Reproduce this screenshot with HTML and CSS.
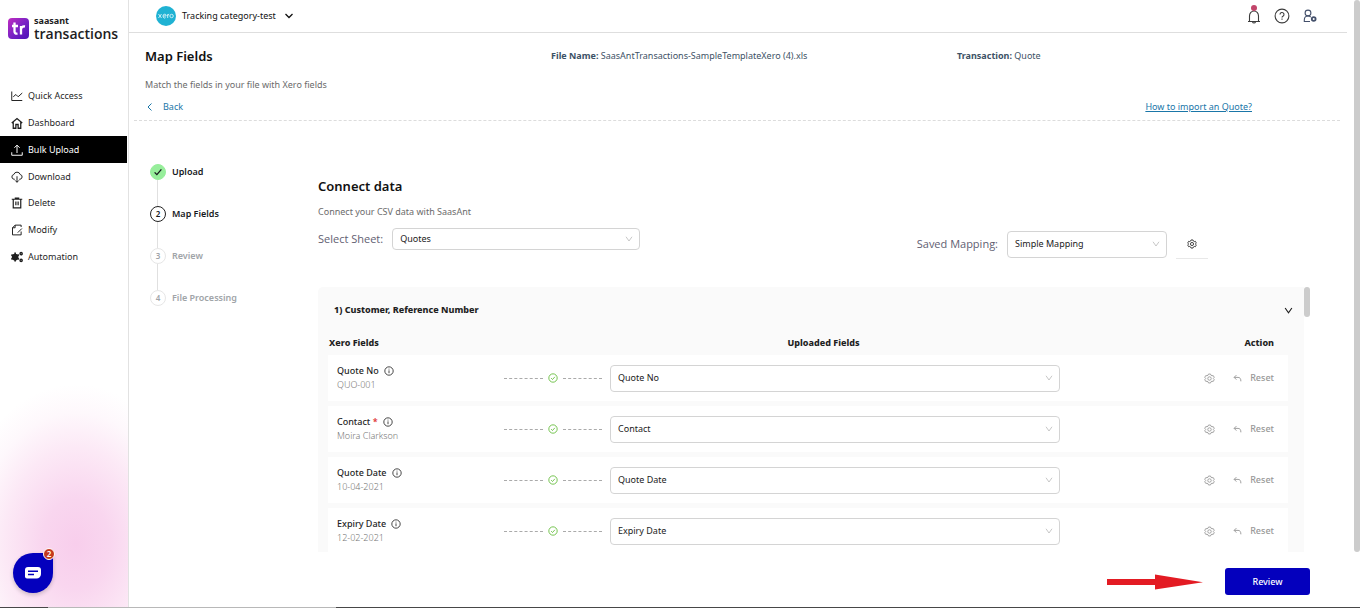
FILE: index.html
```html
<!DOCTYPE html>
<html lang="en">
<head>
<meta charset="utf-8">
<meta name="viewport" content="width=device-width, initial-scale=1">
<title>Map Fields - SaasAnt Transactions</title>
<link rel="stylesheet" href="styles.css">
</head>
<body>
<svg class="defs" aria-hidden="true">
  <symbol id="gear" viewBox="0 0 16 16"><path d="M6.500 1.500h3l.6 1.700 1.500.9 1.800-.4 1.500 2.600-1.200 1.400v.6l1.200 1.400-1.500 2.600-1.800-.4-1.500.9-.6 1.700h-3l-.6-1.700-1.500-.9-1.800.4-1.500-2.600 1.200-1.400v-.6L1.100 6.300l1.500-2.600 1.800.4 1.500-.9z"/><circle cx="8" cy="8" r="2.500"/></symbol>
  <symbol id="info" viewBox="0 0 16 16"><circle cx="8" cy="8" r="6.700"/><path d="M8 7v4.500M8 4.300v1.300"/></symbol>
  <symbol id="ok" viewBox="0 0 16 16"><circle cx="8" cy="8" r="6.700"/><path d="M5 8.200l2.200 2.200 3.800-4.300"/></symbol>
  <symbol id="down" viewBox="0 0 16 16"><path d="M2 3.500L8 12l6-8.500"/></symbol>
  <symbol id="undo" viewBox="0 0 16 16"><path d="M6 2L2 6l4 4M2 6h7c3.500 0 5 2.500 5 7"/></symbol>
</svg>
<div class="app">
  <aside class="sidebar">
    <a class="brand" href="#">
      <svg class="brand-mark" viewBox="0 0 21 21" aria-hidden="true">
        <defs><linearGradient id="mark" x1="0" y1="0" x2="1" y2="1"><stop offset="0" stop-color="#c12cc0"/><stop offset=".5" stop-color="#7b22c5"/><stop offset="1" stop-color="#4a12b8"/></linearGradient></defs>
        <rect width="21" height="21" rx="4" fill="url(#mark)"/>
        <path d="M6.500 4.500v9q0 2.500 3 2.100M4 8h6M13 16.500V8M13 11q.6-3 4-2.500" fill="none" stroke="#fff" stroke-width="2.300"/>
      </svg>
      <span class="brand-text"><span class="brand-top">saasant</span><span class="brand-name">transactions</span></span>
    </a>
    <nav class="nav">
      <a href="#"><svg viewBox="0 0 16 16"><path d="M1 2v12h14M3 9l3.500-3 3 3L15 4"/></svg>Quick Access</a>
      <a href="#"><svg viewBox="0 0 16 16"><path d="M1 8l7-6 7 6M3 7v8h3.500v-5h3v5H13V7" stroke-width="1.700"/></svg>Dashboard</a>
      <a href="#" class="active" aria-current="page"><svg viewBox="0 0 16 16"><path d="M8 12V1.500M4.500 5L8 1.500 11.500 5M1 11v4h14v-4"/></svg>Bulk Upload</a>
      <a href="#"><svg viewBox="0 0 16 16"><path d="M5 11H4a3.200 3.200 0 0 1-.3-6.300 4.500 4.500 0 0 1 8.600 0A3.200 3.200 0 0 1 12 11h-1M8 7v8M5.500 12.500L8 15l2.500-2.500"/></svg>Download</a>
      <a href="#"><svg viewBox="0 0 16 16"><path d="M1 3h14M3 3v11.500h10V3M5 1.500h6M6.500 6v5M9.500 6v5" stroke-width="1.600"/></svg>Delete</a>
      <a href="#"><svg viewBox="0 0 16 16"><path d="M13.500 10v4.500H2V5l3.500-3.500h8V4M2 5h3.500V1.500M9 11.500l5.500-5.500"/></svg>Modify</a>
      <a href="#"><svg viewBox="0 0 16 16"><circle cx="5.500" cy="8" r="3" stroke-width="3"/><path d="M5.500 2v12M.5 5l10 6M.5 11l10-6" stroke-width="2.200"/><circle cx="13.500" cy="3.500" r="1.500" stroke-width="1.800"/><circle cx="13.500" cy="12.500" r="1.500" stroke-width="1.800"/></svg>Automation</a>
    </nav>
    <button class="chat" type="button" aria-label="Open chat">
      <svg viewBox="0 0 16 12" aria-hidden="true"><path d="M3 0h10a3 3 0 0 1 3 3v4a4.500 4.500 0 0 1-4.500 4.500H2a2 2 0 0 1-2-2V3a3 3 0 0 1 3-3z" fill="#fff"/><path d="M3 4.200h10M3 7.500h6" stroke="#0400bd" stroke-width="1.600"/></svg>
      <span class="chat-count">2</span>
    </button>
  </aside>

  <div class="page">
    <header class="topbar">
      <button class="org" type="button">
        <svg class="org-logo" viewBox="0 0 20 20" aria-hidden="true"><circle cx="10" cy="10" r="10" fill="#1fb2d3"/><g fill="none" stroke="#d8f3f8" stroke-width=".9"><path d="M2.500 8l3 4M5.500 8l-3 4M7 10h3.200a1.600 1.900 0 1 0-.6 1.600M11.700 12V8.200M11.700 10q0-1.800 1.500-1.800"/><circle cx="15.600" cy="10" r="1.700"/></g></svg>
        Tracking category-test
        <svg class="org-caret" viewBox="0 0 12 12" aria-hidden="true"><path d="M2.500 4L6 7.500 9.500 4"/></svg>
      </button>
      <div class="tools">
        <button type="button" aria-label="Notifications"><svg viewBox="0 0 16 20"><path d="M2 16.500h12M3.500 16.500V11a4.500 5 0 0 1 9 0v5.500M6.500 17a1.600 1.600 0 0 0 3 0M8 4.500V6"/><circle cx="8" cy="3" r="3" fill="#c2456a" stroke="none"/></svg></button>
        <button type="button" aria-label="Help"><svg viewBox="0 0 16 20"><circle cx="8" cy="11" r="6.900"/><path d="M6 9.500a2 2 0 1 1 3 1.700q-1 .6-1 1.300M8 13.500v1.200"/></svg></button>
        <button type="button" aria-label="Account settings" class="account"><svg viewBox="0 0 16 20"><circle cx="6" cy="8" r="2.900"/><path d="M8 16.500H2.300V15c0-2.500 1.200-4 3.700-4 1.200 0 2 .3 2.700 1"/><circle cx="11.700" cy="14" r="1.900" stroke-width="1.800"/></svg></button>
      </div>
    </header>

    <section class="intro">
      <div class="intro-head">
        <h1>Map Fields</h1>
        <p><b>File Name:</b> SaasAntTransactions-SampleTemplateXero (4).xls</p>
        <p><b>Transaction:</b> Quote</p>
      </div>
      <p class="muted">Match the fields in your file with Xero fields</p>
      <div class="intro-links">
        <a class="back" href="#"><svg viewBox="0 0 10 10" aria-hidden="true"><path d="M6.500 1.500L3 5l3.500 3.500"/></svg>Back</a>
        <a class="how" href="#">How to import an Quote?</a>
      </div>
    </section>

    <div class="work">
      <ol class="steps">
        <li class="done"><span class="dot"><svg viewBox="0 0 16 16" aria-label="Done"><path d="M3.500 8.500l3 3 6-7" stroke-width="1.800"/></svg></span>Upload</li>
        <li class="current"><span class="dot">2</span>Map Fields</li>
        <li><span class="dot">3</span>Review</li>
        <li><span class="dot">4</span>File Processing</li>
      </ol>

      <main class="content">
        <h2>Connect data</h2>
        <p class="muted">Connect your CSV data with SaasAnt</p>
        <div class="filters">
          <div class="field">
            <label for="sheet">Select Sheet:</label>
            <span class="select sheet"><select id="sheet"><option>Quotes</option></select><svg><use href="#down"/></svg></span>
          </div>
          <div class="field saved">
            <label for="mapping">Saved Mapping:</label>
            <span class="select tall mapping"><select id="mapping"><option>Simple Mapping</option></select><svg><use href="#down"/></svg></span>
            <button class="map-settings" type="button" aria-label="Mapping settings"><svg><use href="#gear"/></svg></button>
          </div>
        </div>

        <div class="panel-wrap">
          <div class="panel">
            <button class="group" type="button" aria-expanded="true">1) Customer, Reference Number<svg><use href="#down"/></svg></button>
            <table class="map">
              <thead><tr><th scope="col">Xero Fields</th><th></th><th scope="col" class="mid">Uploaded Fields</th><th scope="col" class="end">Action</th></tr></thead>
              <tbody>
                <tr>
                  <td><label for="f1">Quote No</label><svg class="info"><use href="#info"/></svg><small>QUO-001</small></td>
                  <td><span class="link"><svg><use href="#ok"/></svg></span></td>
                  <td><span class="select tall"><select id="f1"><option>Quote No</option></select><svg><use href="#down"/></svg></span></td>
                  <td><div class="actions"><button type="button" aria-label="Field settings"><svg><use href="#gear"/></svg></button><button type="button"><svg class="undo"><use href="#undo"/></svg>Reset</button></div></td>
                </tr>
                <tr>
                  <td><label for="f2">Contact <i>*</i></label><svg class="info"><use href="#info"/></svg><small>Moira Clarkson</small></td>
                  <td><span class="link"><svg><use href="#ok"/></svg></span></td>
                  <td><span class="select tall"><select id="f2"><option>Contact</option></select><svg><use href="#down"/></svg></span></td>
                  <td><div class="actions"><button type="button" aria-label="Field settings"><svg><use href="#gear"/></svg></button><button type="button"><svg class="undo"><use href="#undo"/></svg>Reset</button></div></td>
                </tr>
                <tr>
                  <td><label for="f3">Quote Date</label><svg class="info"><use href="#info"/></svg><small>10-04-2021</small></td>
                  <td><span class="link"><svg><use href="#ok"/></svg></span></td>
                  <td><span class="select tall"><select id="f3"><option>Quote Date</option></select><svg><use href="#down"/></svg></span></td>
                  <td><div class="actions"><button type="button" aria-label="Field settings"><svg><use href="#gear"/></svg></button><button type="button"><svg class="undo"><use href="#undo"/></svg>Reset</button></div></td>
                </tr>
                <tr>
                  <td><label for="f4">Expiry Date</label><svg class="info"><use href="#info"/></svg><small>12-02-2021</small></td>
                  <td><span class="link"><svg><use href="#ok"/></svg></span></td>
                  <td><span class="select tall"><select id="f4"><option>Expiry Date</option></select><svg><use href="#down"/></svg></span></td>
                  <td><div class="actions"><button type="button" aria-label="Field settings"><svg><use href="#gear"/></svg></button><button type="button"><svg class="undo"><use href="#undo"/></svg>Reset</button></div></td>
                </tr>
              </tbody>
            </table>
          </div>
          <span class="panel-thumb"></span>
        </div>

        <div class="footer">
          <svg class="arrow" viewBox="0 0 96 16" aria-hidden="true"><path d="M0 5h48V0.500L96 8.300 48 15.500V11H0z" fill="#e31b23"/></svg>
          <button class="review" type="button">Review</button>
        </div>
      </main>
    </div>
  </div>
  <div class="page-scroll"><span></span></div>
</div>
</body>
</html>
```
FILE: styles.css
```css
* { box-sizing: border-box; }

body {
  margin: 0;
  background: #fff;
  color: #1f1f1f;
  font: 9px/14px "Noto Sans", "Open Sans", sans-serif;
}

h1, h2, p, ol { margin: 0; padding: 0; }

a { color: inherit; text-decoration: none; }

button {
  padding: 0;
  border: 0;
  background: none;
  color: inherit;
  font: inherit;
  cursor: pointer;
}

svg {
  flex: none;
  width: 12px;
  height: 12px;
  fill: none;
  stroke: currentColor;
  stroke-width: 1.3;
}

.brand-mark, .org-logo, .chat svg, .arrow { stroke: none; }

.defs { display: none; }

.app {
  display: grid;
  grid-template-columns: 129px minmax(0, 1fr) 6px;
  min-height: 100vh;
  padding-bottom: 1px;
  background: linear-gradient(90deg, #484848 48px, #b8b8b8 48px 336px, #484848 336px) bottom / 100% 1px no-repeat;
}

/* Sidebar */
.sidebar {
  display: flex;
  flex-direction: column;
  padding: 14px 0 14px;
  border-right: 1px solid #e2e2e2;
  background: radial-gradient(ellipse 120px 160px at 76px 544px, #f8ceec 0%, #f9d6ef 28%, #fce9f6 60%, #fef8fc 82%, #fff 100%);
}

.brand {
  display: flex;
  align-items: center;
  gap: 5px;
  height: 28px;
  padding-left: 8px;
  color: #1d1d22;
}

.brand-mark { width: 21px; height: 21px; }

.brand-text { display: flex; flex-direction: column; font-weight: 700; }

.brand-top { font-size: 9px; line-height: 12px; }

.brand-name { font-size: 14px; line-height: 14px; font-family: "Open Sans", sans-serif; font-weight: 600; }

.nav { display: flex; flex-direction: column; height: 187px; margin-top: 41px; }

.nav a {
  display: flex;
  flex: 1;
  align-items: center;
  gap: 5px;
  margin-right: 1px;
  padding-left: 11px;
}

.nav .active { background: #000; color: #fff; }

.chat {
  position: relative;
  display: grid;
  place-items: center;
  width: 40px;
  height: 40px;
  margin: auto 0 0 13px;
  border-radius: 50% 0 50% 50%;
  background: #0400bd;
  box-shadow: 0 2px 4px #0003;
}

.chat svg { width: 16px; height: 12px; }

.chat-count {
  position: absolute;
  top: -5px;
  right: -2px;
  width: 12px;
  height: 12px;
  border: 1px solid #fff;
  border-radius: 50%;
  background: #c4391d;
  color: #fff;
  font-size: 8px;
  font-weight: 600;
  line-height: 10px;
}

/* Top bar */
.page { display: flex; flex-direction: column; }

.topbar {
  display: flex;
  align-items: center;
  justify-content: space-between;
  height: 33px;
  margin-right: 7px;
  padding: 0 29px 0 27px;
  border-bottom: 1px solid #dedede;
}

.org { display: flex; align-items: center; gap: 6px; color: #111; }

.org-logo { width: 20px; height: 20px; }

.org-caret { margin-left: 1px; }

.tools { display: flex; gap: 12px; padding-bottom: 2px; color: #3c3c3c; }

.tools button { display: flex; }

.tools svg { width: 16px; height: 20px; stroke-width: 1.1; }

.tools .account { color: #44506b; }

/* Page heading */
.intro {
  margin: 0 14px 0 5px;
  padding: 13px 0 6px 11px;
  border-bottom: 1px dashed #dcdcdc;
}

.intro-head {
  display: grid;
  grid-template-columns: 406fr 406fr 383fr;
  align-items: center;
  color: #3d5266;
}

h1, h2 { color: #111; font-size: 13px; line-height: 20px; font-weight: 600; }

.muted { color: #6b6b6b; }

.intro .muted { margin-top: 12px; }

.intro-links {
  display: flex;
  justify-content: space-between;
  margin-top: 8px;
  padding-right: 88px;
  color: #1a76a8;
}

.back { display: flex; align-items: center; gap: 8px; }

.back svg { width: 10px; height: 10px; stroke-width: 1; }

.how { text-decoration: underline; }

/* Steps */
.work {
  display: grid;
  grid-template-columns: 168px minmax(0, 1fr);
  flex: 1;
  padding: 0 44px 0 21px;
}

.steps {
  display: flex;
  flex-direction: column;
  gap: 26px;
  padding-top: 43px;
  list-style: none;
  color: #a0a4a8;
  font-weight: 600;
}

.steps li { position: relative; display: flex; align-items: center; gap: 6px; height: 16px; }

.steps li + li::before {
  content: "";
  position: absolute;
  left: 7px;
  bottom: 16px;
  height: 26px;
  border-left: 1px solid #e0e0e0;
}

.dot {
  display: grid;
  place-items: center;
  width: 16px;
  height: 16px;
  border: 1px solid #e6e6e6;
  border-radius: 50%;
  font-size: 8px;
}

.steps .done, .steps .current { color: #16191d; }

.done .dot { border-color: #97ee9b; background: #97ee9b; }

.current .dot { border-color: #222; }

/* Content */
.content { display: flex; flex-direction: column; padding-top: 55px; }

.content .muted { margin-top: 9px; }

.filters { display: flex; justify-content: space-between; margin-top: 9px; }

.field { display: flex; align-items: center; height: 22px; }

.field label { color: #5f6072; font-family: "Open Sans", sans-serif; font-size: 11px; }

.saved { height: 28px; margin: 2px 102px 0 0; }

.select { position: relative; display: flex; align-items: center; height: 22px; }

.select select {
  width: 100%;
  height: 100%;
  padding: 0 20px 0 7px;
  border: 1px solid #d4d4d4;
  border-radius: 4px;
  appearance: none;
  background: #fff;
  color: #222;
  font: inherit;
}

.select svg { position: absolute; right: 7px; width: 8px; height: 8px; color: #aaa; pointer-events: none; }

.tall { height: 27px; }

.sheet { width: 248px; margin-left: 9px; }

.mapping { width: 160px; margin-left: 9px; }

.map-settings {
  display: grid;
  place-items: center;
  width: 32px;
  height: 30px;
  margin-left: 9px;
  border-bottom: 1px solid #e8e8e8;
}

.map-settings svg { width: 10px; height: 10px; }

.panel-wrap { display: flex; margin-top: 29px; }

.panel {
  flex: 1;
  height: 265px;
  padding: 10px 16px 0 10px;
  overflow: hidden;
  border-radius: 5px 0 0 0;
  background: #fafafa;
}

.panel-thumb { width: 6px; height: 30px; border-radius: 3px; background: #ccc; }

.group {
  display: flex;
  align-items: center;
  justify-content: space-between;
  width: 100%;
  height: 26px;
  padding-left: 6px;
  font-weight: 800;
}

.group svg { width: 9px; height: 9px; margin-right: -5px; stroke-width: 2; }

.map { width: 100%; border-collapse: separate; border-spacing: 0; table-layout: fixed; }

.map th { height: 32px; padding: 7px 0 0 1px; text-align: left; font-weight: 800; }

.map th:nth-child(1) { width: 176px; }
.map th:nth-child(2) { width: 106px; }
.map th:nth-child(4) { width: 228px; }

.map .mid { padding-right: 24px; text-align: center; }

.map .end { padding-right: 14px; text-align: right; }

.map td { height: 51px; padding: 0; border-bottom: 5px solid #fafafa; background: #fff; }

.map td:first-child { padding-left: 9px; }

.map label { font-weight: 500; }

.map i { color: #d22; font-style: normal; }

.info { width: 10px; height: 10px; margin-left: 5px; vertical-align: -2px; }

.map small { display: block; color: #777; font-size: 9px; font-weight: 300; }

.link { display: flex; align-items: center; gap: 5px; margin-right: 8px; }

.link::before, .link::after { content: ""; flex: 1; border-top: 1px dashed #aaa; }

.link svg { width: 10px; height: 10px; color: #59b82c; }

.actions { display: flex; justify-content: flex-end; gap: 18px; padding-right: 14px; color: #999; font-weight: 500; }

.actions button { display: flex; align-items: center; gap: 8px; }

.actions svg { width: 11px; height: 11px; }

.actions .undo { width: 9px; height: 9px; stroke-width: 1.7; }

.footer {
  display: flex;
  align-items: center;
  justify-content: flex-end;
  gap: 22px;
  padding: 16px 0 12px;
}

.arrow { width: 96px; height: 16px; }

.review {
  width: 85px;
  height: 27px;
  border-radius: 3px;
  background: #0400bd;
  color: #fff;
  font-weight: 500;
}

.page-scroll { display: flex; padding-bottom: 55px; }

.page-scroll span { flex: 1; border-radius: 3px; background: #ccc; }
```
